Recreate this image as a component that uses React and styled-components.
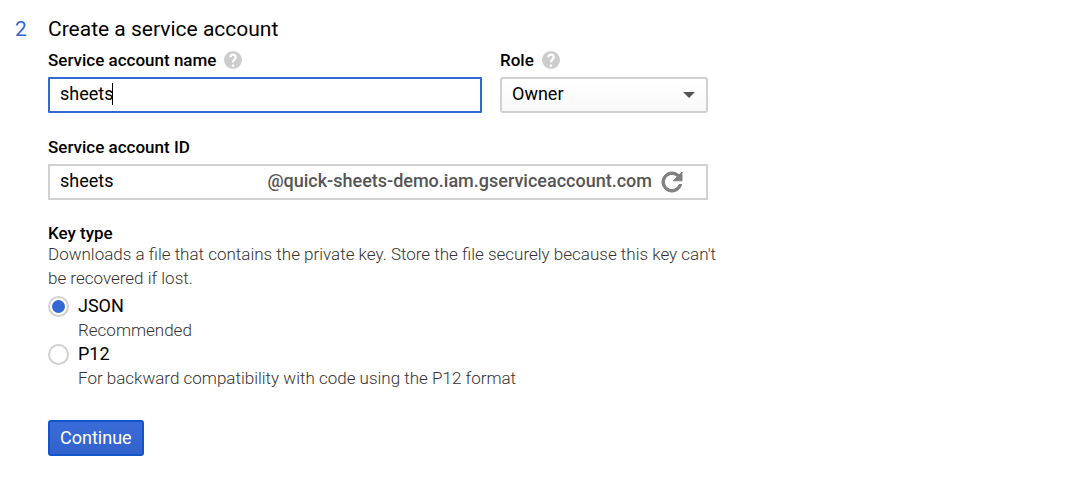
import React, { useState } from "react";
import styled, { createGlobalStyle } from "styled-components";

const GlobalStyle = createGlobalStyle`
  *, *::before, *::after { box-sizing: border-box; }
  body {
    margin: 0;
    background: #fff;
    color: #000;
    font-family: Roboto, "Liberation Sans", sans-serif;
    font-size: 18px;
  }
  input, select, button { font: inherit; color: inherit; margin: 0; }
`;

const Step = styled.section`
  display: grid;
  grid-template-columns: 18px minmax(0, 660px);
  column-gap: 15px;
  padding: 17px 15px 48px;
`;

const StepNumber = styled.span`
  color: #3367d6;
  font-size: 21px;
  line-height: 24px;
`;

const Title = styled.h2`
  margin: 0 0 9px;
  font-size: 21px;
  font-weight: 400;
  line-height: 24px;
`;

const Form = styled.form`
  display: flex;
  flex-direction: column;
  gap: 24px;
`;

const FieldRow = styled.div`
  display: grid;
  grid-template-columns: minmax(0, 1fr) 208px;
  column-gap: 18px;
`;

const Field = styled.div`
  display: flex;
  flex-direction: column;
  gap: 7px;
`;

const LabelRow = styled.div`
  display: flex;
  align-items: center;
  gap: 8px;
`;

const Label = styled.label`
  font-size: 17px;
  font-weight: 500;
  line-height: 20px;
`;

const HelpButton = styled.button`
  display: flex;
  padding: 0;
  border: 0;
  background: none;
  color: #ccc;
`;

const InputBox = styled.div`
  position: relative;
  display: flex;
  align-items: center;
  height: 36px;
  padding: 0 10px;
  border: 2px solid ${(p) => (p.$active ? "#3367d6" : "#d1d1d1")};
  border-radius: ${(p) => (p.$active ? "1px" : "0")};
`;

const TextInput = styled.input`
  flex: 1;
  min-width: 0;
  height: 32px;
  padding: 0 0 3px;
  border: 0;
  outline: 0;
  background: transparent;
  caret-color: transparent;
`;

const Caret = styled.span`
  position: absolute;
  left: 62px;
  top: 4px;
  width: 1px;
  height: 22px;
  background: #000;
`;

const Domain = styled.span`
  color: #555;
  font-weight: 500;
  line-height: 30px;
  padding-bottom: 2px;
`;

const RefreshButton = styled.button`
  display: flex;
  margin: 0 9px 0 5px;
  padding: 0;
  border: 0;
  background: none;
  color: #808080;
`;

const SelectBox = styled.div`
  display: grid;
  align-items: center;
  height: 36px;
  border: 2px solid #d1d1d1;
  border-radius: 3px;
  background: linear-gradient(#fff, #f8f8f8);

  > * { grid-area: 1 / 1; }
  > svg { justify-self: end; margin-right: 11px; pointer-events: none; }
`;

const Select = styled.select`
  appearance: none;
  width: 100%;
  height: 32px;
  padding: 0 32px 3px 10px;
  border: 0;
  outline: 0;
  background: transparent;
`;

const KeyType = styled.fieldset`
  min-width: 0;
  margin: 0;
  padding: 0;
  border: 0;
`;

const Legend = styled.legend`
  padding: 0;
  font-size: 17px;
  font-weight: 500;
  line-height: 18px;
`;

const Description = styled.p`
  margin: 0 -20px 4px 0;
  color: #333;
  font-size: 17px;
  font-weight: 300;
  line-height: 24px;
`;

const Option = styled.label`
  display: grid;
  grid-template-columns: 21px 1fr;
  column-gap: 9px;
  align-items: center;
  line-height: 24px;
`;

const Radio = styled.input`
  appearance: none;
  display: grid;
  place-items: center;
  width: 21px;
  height: 21px;
  border: 2px solid #d1d1d1;
  border-radius: 50%;
  background: #fff;

  &:checked::before {
    content: "";
    width: 13px;
    height: 13px;
    border-radius: 50%;
    background: #3367d6;
  }
`;

const Hint = styled.span`
  grid-column: 2;
  color: #333;
  font-size: 17px;
  font-weight: 300;
`;

const Continue = styled.button`
  align-self: flex-start;
  height: 36px;
  margin-top: 6px;
  padding: 0 10px 2px;
  border: 2px solid #1155cc;
  border-radius: 3px;
  background: linear-gradient(#3b6bd8, #3262cc);
  color: #fff;
`;

function Help({ about }) {
  return (
    <HelpButton type="button" aria-label={`Help: ${about}`}>
      <svg width="18" height="18" viewBox="2 2 20 20" fill="currentColor" aria-hidden="true">
        <circle cx="12" cy="12" r="10" />
        <path d="M9 9a3 3 0 0 1 6 0c0 2-3 2.500-3 5.500M12 17v2.400" fill="none" stroke="#fff" strokeWidth="2.600" />
      </svg>
    </HelpButton>
  );
}

const keyTypes = [
  { value: "JSON", hint: "Recommended" },
  { value: "P12", hint: "For backward compatibility with code using the P12 format" },
];

export default function App() {
  const [name, setName] = useState("sheets");
  const [id, setId] = useState("sheets");
  const [keyType, setKeyType] = useState("JSON");

  return (
    <>
      <GlobalStyle />
      <Step>
        <StepNumber>2</StepNumber>
        <div>
          <Title>Create a service account</Title>
          <Form onSubmit={(e) => e.preventDefault()}>
            <FieldRow>
              <Field>
                <LabelRow>
                  <Label htmlFor="name">Service account name</Label>
                  <Help about="Service account name" />
                </LabelRow>
                <InputBox $active>
                  <TextInput id="name" value={name} onChange={(e) => setName(e.target.value)} />
                  <Caret />
                </InputBox>
              </Field>
              <Field>
                <LabelRow>
                  <Label htmlFor="role">Role</Label>
                  <Help about="Role" />
                </LabelRow>
                <SelectBox>
                  <Select id="role" defaultValue="Owner">
                    <option>Owner</option>
                  </Select>
                  <svg width="12" height="6" viewBox="0 0 12 6" aria-hidden="true">
                    <path d="M0 0h12L6 6z" fill="#555" />
                  </svg>
                </SelectBox>
              </Field>
            </FieldRow>
            <Field>
              <Label htmlFor="account-id">Service account ID</Label>
              <InputBox>
                <TextInput id="account-id" value={id} onChange={(e) => setId(e.target.value)} />
                <Domain>@quick-sheets-demo.iam.gserviceaccount.com</Domain>
                <RefreshButton type="button" aria-label="Generate a new ID">
                  <svg width="30" height="30" viewBox="0 0 24 24" fill="currentColor" aria-hidden="true">
                    <path
                      d="M17.650 6.350C16.200 4.900 14.210 4 12 4c-4.420 0-7.990 3.580-7.990 8s3.570 8 7.990 8c3.730 0 6.840-2.550 7.730-6h-2.080c-.82 2.330-3.040 4-5.650 4-3.310 0-6-2.690-6-6s2.690-6 6-6c1.660 0 3.140.69 4.220 1.780L13 11h7V4l-2.350 2.350z"
                      stroke="currentColor"
                      strokeWidth="0.800"
                    />
                  </svg>
                </RefreshButton>
              </InputBox>
            </Field>
            <KeyType>
              <Legend>Key type</Legend>
              <Description>
                Downloads a file that contains the private key. Store the file securely because
                this key can't be recovered if lost.
              </Description>
              {keyTypes.map(({ value, hint }) => (
                <Option key={value}>
                  <Radio
                    type="radio"
                    name="key-type"
                    checked={keyType === value}
                    onChange={() => setKeyType(value)}
                  />
                  <span>{value}</span>
                  <Hint>{hint}</Hint>
                </Option>
              ))}
            </KeyType>
            <Continue type="submit">Continue</Continue>
          </Form>
        </div>
      </Step>
    </>
  );
}
